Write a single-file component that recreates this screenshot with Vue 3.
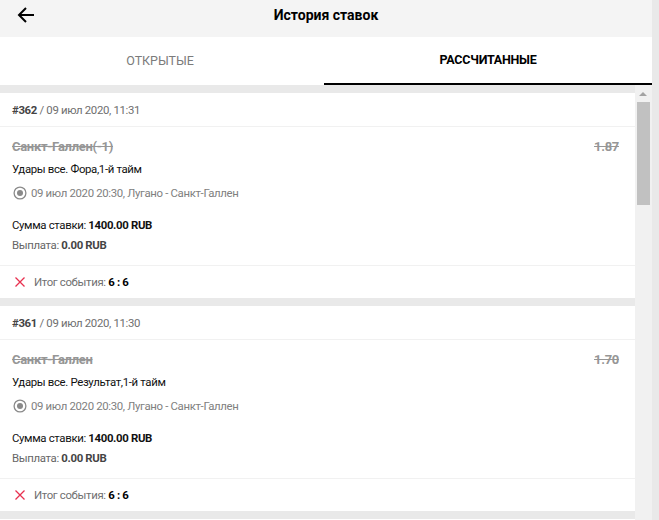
<script setup>
const bets = [
  { id: '#362', date: '09 июл 2020, 11:31', name: 'Санкт-Галлен(-1)', odd: '1.87', market: 'Удары все. Фора,1-й тайм' },
  { id: '#361', date: '09 июл 2020, 11:30', name: 'Санкт-Галлен', odd: '1.70', market: 'Удары все. Результат,1-й тайм' },
]
</script>

<template>
  <div class="page">
    <div class="main">
      <header class="top">
        <svg class="back" width="18" height="16" viewBox="0 0 18 16" fill="none" stroke="#000" stroke-width="2">
          <path d="M17 8H2M9 1L2 8l7 7" />
        </svg>
        <h1 class="title">История ставок</h1>
      </header>
      <nav class="tabs">
        <div class="tab">ОТКРЫТЫЕ</div>
        <div class="tab active">РАССЧИТАННЫЕ</div>
      </nav>
      <div class="body">
        <div class="list">
          <article v-for="b in bets" :key="b.id" class="card">
            <div class="head"><b>{{ b.id }}</b> / {{ b.date }}</div>
            <div class="info">
              <div class="line1"><s>{{ b.name }}</s><s>{{ b.odd }}</s></div>
              <div class="market">{{ b.market }}</div>
              <div class="event">
                <svg width="14" height="14" viewBox="0 0 14 14">
                  <circle cx="7" cy="7" r="5.9" fill="none" stroke="#8a8a8a" stroke-width="1.3" />
                  <circle cx="7" cy="7" r="3" fill="#8a8a8a" />
                </svg>
                <span>09 июл 2020 20:30, Лугано - Санкт-Галлен</span>
              </div>
              <div class="sum">Сумма ставки: <b>1400.00 RUB</b></div>
              <div class="pay">Выплата: <b>0.00 RUB</b></div>
            </div>
            <div class="result">
              <svg width="12" height="12" viewBox="0 0 12 12" fill="none" stroke="#e8304f" stroke-width="1.3">
                <path d="M1.5 1.5l9 9M10.5 1.5l-9 9" />
              </svg>
              <span>Итог события: <b>6 : 6</b></span>
            </div>
          </article>
          <article class="card"></article>
        </div>
        <div class="scroll">
          <div class="arrow"></div>
          <div class="thumb"></div>
        </div>
      </div>
    </div>
    <div class="edge"></div>
  </div>
</template>

<style>
html, body { margin: 0; overflow: hidden; }
</style>

<style scoped>
.page {
  display: flex;
  width: 659px;
  height: 520px;
  overflow: hidden;
  background: #e9e9e9;
  font-family: Roboto, "Liberation Sans", sans-serif;
  font-size: 11.4px;
  letter-spacing: -0.34px;
  color: #000;
}
.main {
  width: 652px;
  display: flex;
  flex-direction: column;
}
.edge { width: 7px; }
.top {
  height: 37px;
  flex: none;
  background: #f4f4f4;
  display: flex;
  align-items: center;
  justify-content: center;
  position: relative;
}
.back { position: absolute; left: 17px; top: 7px; }
.title {
  margin: 0 0 7px;
  font-size: 14px;
  font-weight: 700;
  letter-spacing: 0;
}
.tabs {
  height: 48px;
  flex: none;
  background: #fff;
  display: flex;
}
.tab {
  flex: 1;
  display: flex;
  align-items: center;
  justify-content: center;
  font-size: 12.5px;
  letter-spacing: -0.05px;
  color: #7b7b7b;
  padding: 0 4px 1px 0;
  box-sizing: border-box;
}
.tab.active {
  color: #000;
  font-weight: 700;
  letter-spacing: -0.25px;
  border-bottom: 2px solid #000;
  padding: 0 0 1px;
}
.tab:first-child { flex: 0 0 324px; }
.body {
  flex: 1;
  min-height: 0;
  display: flex;
}
.list {
  width: 635px;
  padding-top: 8px;
  display: flex;
  flex-direction: column;
  gap: 8px;
}
.card {
  background: #fff;
  height: 205px;
  flex: none;
}
.head {
  height: 34px;
  box-sizing: border-box;
  border-bottom: 1px solid #f1f1f1;
  padding: 0 12px;
  display: flex;
  align-items: center;
  white-space: pre;
  color: #6e6e6e;
}
.head b { color: #444; }
.info {
  height: 138px;
  box-sizing: border-box;
  padding: 12px 16px 0 12px;
}
.line1 {
  display: flex;
  justify-content: space-between;
  font-size: 13px;
  letter-spacing: -0.3px;
  font-weight: 700;
  line-height: 16px;
  color: #969696;
}
.market { margin-top: 6px; line-height: 16px; color: #111; }
.event {
  margin-top: 7px;
  display: flex;
  align-items: center;
  gap: 4px;
  padding-left: 1px;
  line-height: 18px;
  color: #808080;
}
.sum { margin-top: 14px; line-height: 18px; color: #111; }
.pay { margin-top: 2px; line-height: 18px; color: #666; }
.pay b { color: #444; }
.result {
  height: 33px;
  box-sizing: border-box;
  border-top: 1px solid #f1f1f1;
  padding: 0 14px 1px;
  display: flex;
  align-items: center;
  gap: 8px;
  color: #707070;
}
.result b { color: #000; }
.scroll {
  width: 17px;
  background: #f1f1f1;
  position: relative;
}
.arrow {
  position: absolute;
  left: 4px;
  top: 7px;
  border-left: 4px solid transparent;
  border-right: 4px solid transparent;
  border-bottom: 4px solid #a3a3a3;
}
.thumb {
  position: absolute;
  left: 2px;
  top: 17px;
  width: 13px;
  height: 103px;
  background: #c1c1c1;
}
</style>
